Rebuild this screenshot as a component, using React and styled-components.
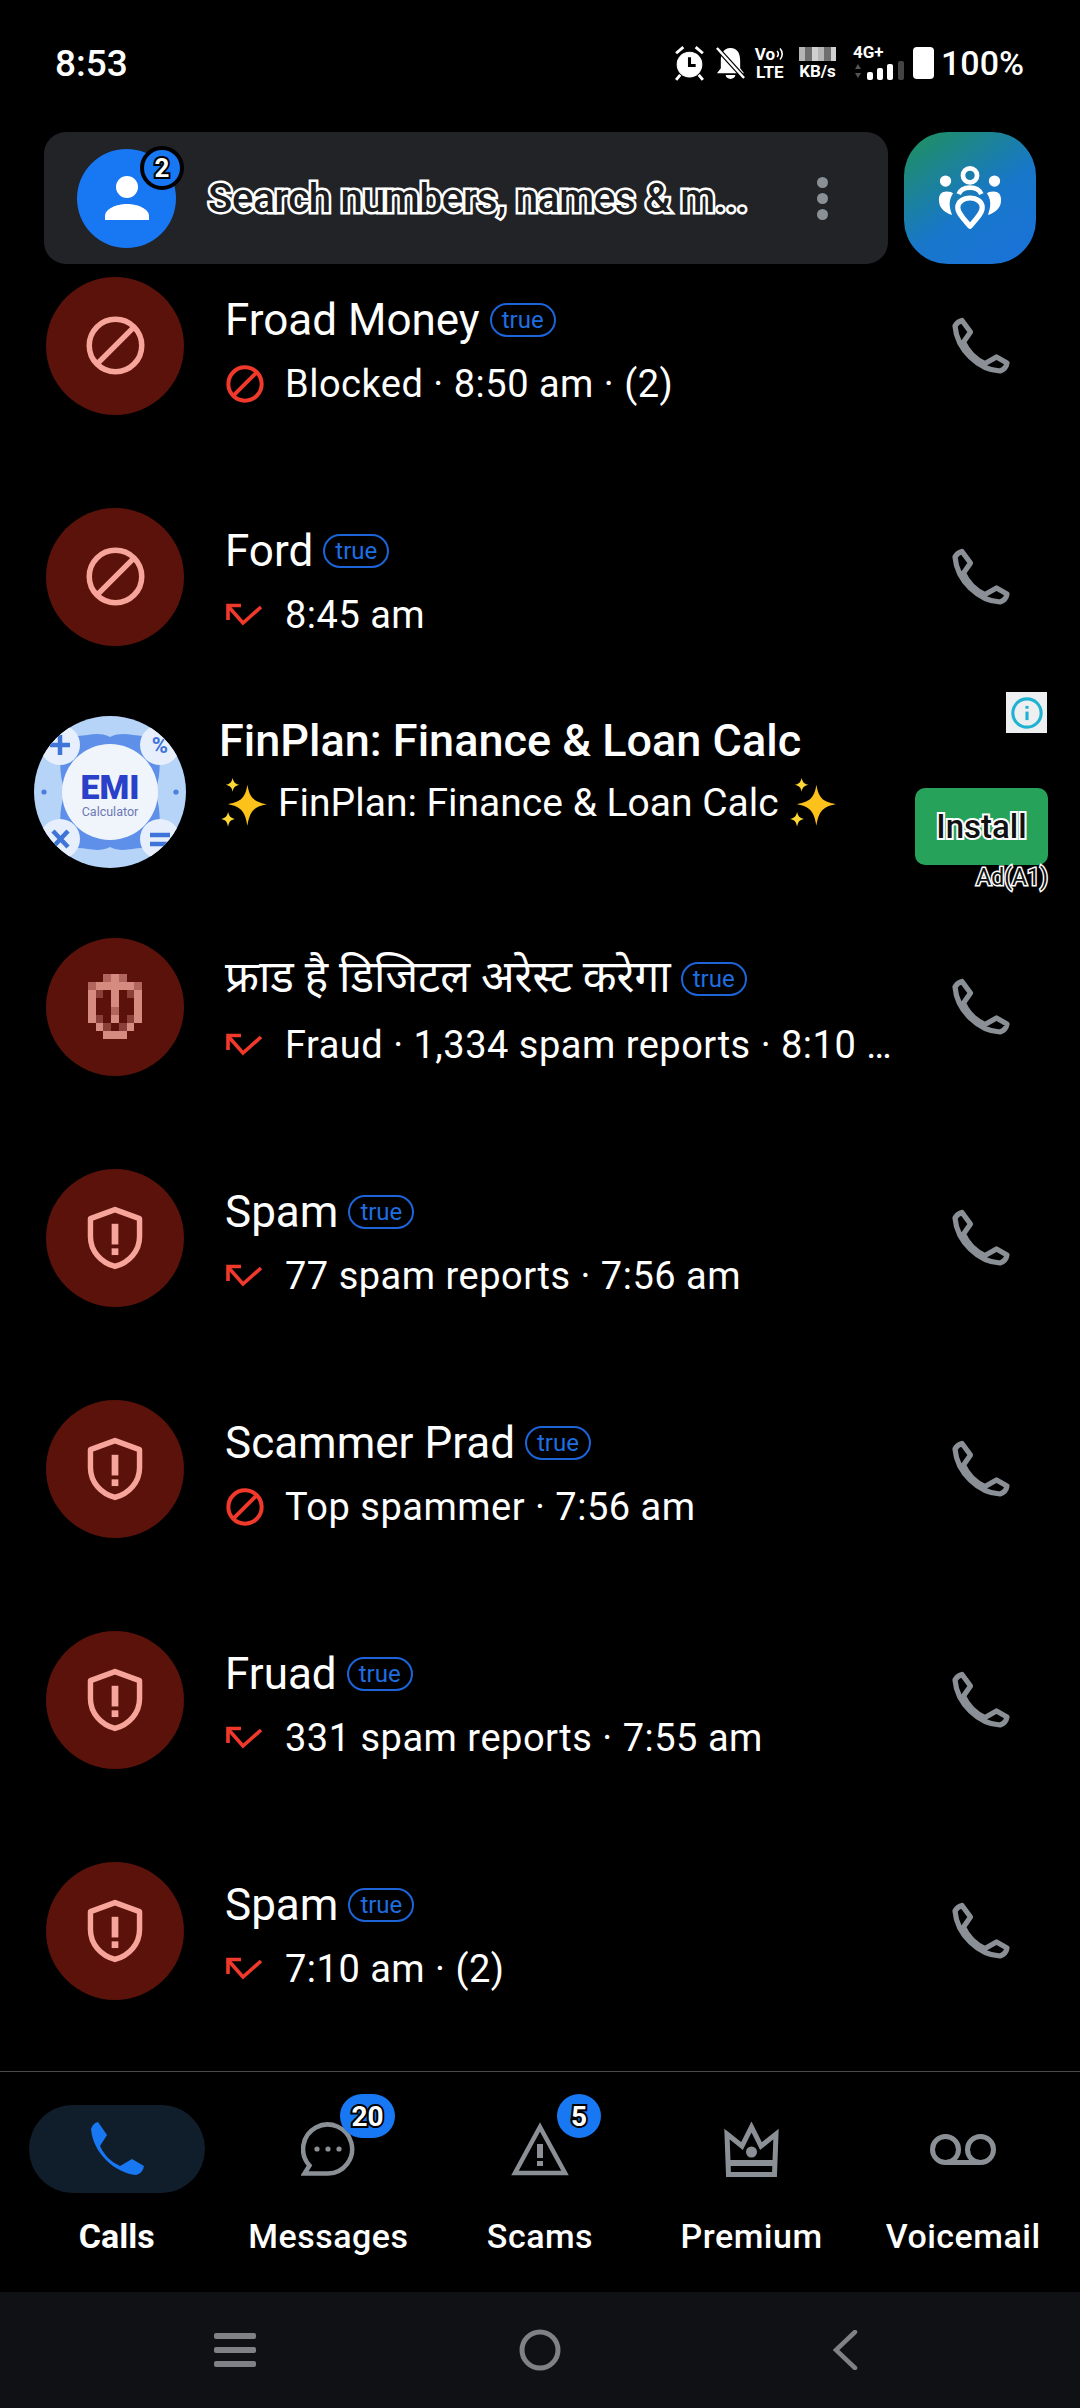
import React from 'react';
import styled, { createGlobalStyle } from 'styled-components';

const GlobalStyle = createGlobalStyle`
  html, body {
    margin: 0;
    padding: 0;
    background: #000;
  }
  * {
    box-sizing: border-box;
  }
`;

const Screen = styled.div`
  width: 1080px;
  height: 2408px;
  display: flex;
  flex-direction: column;
  overflow: hidden;
  background: #000;
  color: #fff;
  font-family: Roboto, "Noto Sans", sans-serif;
`;

const StatusBar = styled.div`
  height: 132px;
  flex: none;
  padding: 0 56px 6px 55px;
  display: flex;
  align-items: center;
  justify-content: space-between;
`;

const Clock = styled.span`
  font-size: 37px;
  font-weight: 500;
`;

const StatusIcons = styled.div`
  display: flex;
  align-items: center;
  gap: 10px;
`;

const StackedLabel = styled.div`
  display: flex;
  flex-direction: column;
  align-items: ${(p) => p.$align || 'center'};
  gap: ${(p) => p.$gap || 3}px;
  margin-left: ${(p) => p.$offset || 0}px;
  font-size: 17px;
  font-weight: 700;
  line-height: 15px;
`;

const VoLine = styled.span`
  display: flex;
  align-items: center;
  gap: 1px;
`;

const BlurBlock = styled.div`
  width: 37px;
  height: 14px;
  background: repeating-linear-gradient(90deg, #b5b5b5 0 6px, #6f6f6f 6px 13px, #d0d0d0 13px 19px);
`;

const Battery = styled.div`
  width: 21px;
  height: 32px;
  margin-left: -2px;
  border-radius: 4px;
  background: #fff;
`;

const BatteryText = styled.span`
  font-size: 34px;
  font-weight: 500;
  margin-left: -3px;
`;

const SearchRow = styled.div`
  height: 132px;
  flex: none;
  padding: 0 44px;
  display: flex;
  gap: 16px;
`;

const SearchBar = styled.div`
  flex: 1;
  display: flex;
  align-items: center;
  padding: 0 33px;
  background: #212327;
  border-radius: 22px;
`;

const ProfileAvatar = styled.div`
  width: 99px;
  height: 99px;
  flex: none;
  position: relative;
  display: flex;
  align-items: center;
  justify-content: center;
  border-radius: 50%;
  background: #1877f2;
`;

const ProfileBadge = styled.div`
  position: absolute;
  top: -3px;
  right: -8px;
  width: 44px;
  height: 44px;
  display: flex;
  align-items: center;
  justify-content: center;
  border-radius: 50%;
  border: 4px solid #000;
  background: #1877f2;
  font-size: 26px;
  font-weight: 700;
  -webkit-text-stroke: 4px #000;
  paint-order: stroke fill;
`;

const SearchText = styled.span`
  flex: 1;
  margin-left: 32px;
  font-size: 40px;
  font-weight: 500;
  letter-spacing: -0.2px;
  white-space: nowrap;
  color: #1c1d20;
  -webkit-text-stroke: 5px #fff;
  paint-order: stroke fill;
`;

const MenuDots = styled.div`
  display: flex;
  flex-direction: column;
  gap: 5px;
  margin-right: 27px;

  span {
    width: 11px;
    height: 11px;
    border-radius: 50%;
    background: #8b9096;
  }
`;

const FamilyButton = styled.div`
  width: 132px;
  flex: none;
  display: flex;
  align-items: center;
  justify-content: center;
  border-radius: 44px;
  background: linear-gradient(145deg, #1f8f63 5%, #1877c9 55%, #1a72dc 100%);
`;

const ListViewport = styled.div`
  flex: 1;
  overflow: hidden;
`;

const List = styled.div`
  margin-top: -34px;
`;

const Row = styled.div`
  height: 231px;
  display: flex;
  align-items: center;
  padding: 0 46px;
`;

const Avatar = styled.div`
  width: 138px;
  height: 138px;
  flex: none;
  display: flex;
  align-items: center;
  justify-content: center;
  border-radius: 50%;
  background: #5a120b;
`;

const RowBody = styled.div`
  flex: 1;
  min-width: 0;
  margin: 10px 0 0 41px;
`;

const TitleLine = styled.div`
  display: flex;
  align-items: center;
  gap: 10px;
  height: 56px;
`;

const Title = styled.span`
  font-size: 44px;
  white-space: nowrap;
  padding-bottom: ${(p) => (p.$lifted ? 12 : 0)}px;
`;

const Tag = styled.span`
  width: 66px;
  height: 34px;
  display: flex;
  align-items: center;
  justify-content: center;
  margin-bottom: ${(p) => (p.$lifted ? 4 : 0)}px;
  border: 2px solid #1c64d8;
  border-radius: 17px;
  color: #1f6ee0;
  font-size: 24px;
`;

const SubLine = styled.div`
  display: flex;
  align-items: center;
  height: 52px;
  margin-top: 10px;
  font-size: 38px;
  letter-spacing: 0.5px;
  white-space: nowrap;
`;

const SubIcon = styled.span`
  width: 60px;
  flex: none;
  display: flex;
  align-items: center;
`;

const CallButton = styled.div`
  width: 120px;
  flex: none;
  display: flex;
  justify-content: flex-end;
  padding-right: 23px;
`;

const AdRow = styled.div`
  height: 199px;
  position: relative;
  display: flex;
  align-items: center;
  padding: 0 33px;
`;

const AdBody = styled.div`
  margin: -40px 0 0 32px;
`;

const AdTitle = styled.div`
  font-size: 45px;
  font-weight: 500;
  line-height: 56px;
`;

const AdSubtitle = styled.div`
  display: flex;
  align-items: center;
  gap: 9px;
  margin-top: 6px;
  font-size: 39px;
  line-height: 54px;
`;

const AdInfo = styled.div`
  position: absolute;
  top: 0;
  right: 33px;
  width: 41px;
  height: 41px;
  display: flex;
  align-items: center;
  justify-content: center;
  background: #eeeff1;
`;

const InstallColumn = styled.div`
  position: absolute;
  top: 96px;
  right: 32px;
  display: flex;
  flex-direction: column;
  align-items: flex-end;
`;

const InstallButton = styled.div`
  width: 133px;
  height: 77px;
  display: flex;
  align-items: center;
  justify-content: center;
  border-radius: 10px;
  background: #27a25a;
  color: #111;
  font-size: 33px;
  font-weight: 500;
  -webkit-text-stroke: 4px #fff;
  paint-order: stroke fill;
`;

const AdLabel = styled.div`
  font-size: 23px;
  line-height: 26px;
  color: #111;
  -webkit-text-stroke: 3px #fff;
  paint-order: stroke fill;
`;

const BottomNav = styled.div`
  height: 221px;
  flex: none;
  display: flex;
  padding: 0 11px;
  border-top: 1px solid #4a4a4a;
`;

const Tab = styled.div`
  flex: 1;
  display: flex;
  flex-direction: column;
  align-items: center;
  padding-top: 33px;
`;

const TabIcon = styled.div`
  width: 176px;
  height: 88px;
  position: relative;
  display: flex;
  align-items: center;
  justify-content: center;
  border-radius: 44px;
  background: ${(p) => (p.$active ? '#101e2c' : 'transparent')};
`;

const TabBadge = styled.span`
  position: absolute;
  top: -11px;
  left: ${(p) => p.$left}px;
  min-width: 44px;
  height: 44px;
  padding: 0 11px;
  display: flex;
  align-items: center;
  justify-content: center;
  border-radius: 22px;
  background: #1877f2;
  font-size: 28px;
  font-weight: 700;
  -webkit-text-stroke: 4px #000;
  paint-order: stroke fill;
`;

const TabLabel = styled.span`
  margin-top: 23px;
  font-size: 34px;
  font-weight: ${(p) => (p.$active ? 700 : 500)};
  letter-spacing: ${(p) => (p.$active ? 0 : 0.5)}px;
`;

const SystemNav = styled.div`
  height: 116px;
  flex: none;
  display: flex;
  align-items: center;
  justify-content: center;
  gap: 235px;
  background: #0f1115;
`;

const SystemButton = styled.div`
  width: 70px;
  display: flex;
  justify-content: center;
`;

const PHONE_PATH = 'M4 10 Q6 6 11 4.5 L19.5 16 L12.5 26 C17 36 24 43 34 47.5 L45.5 41 L56 47 Q55 53 49 55 C28 54 6 34 4 10 Z';
const PHONE_SOLID = 'M4 10 Q6 4 11 3 L20 16 L13 27 C17 36 24 43 33 47 L45 40 L57 47 Q56 54 49 56 C28 54 6 34 4 10 Z';

const BlockIcon = ({ size = 63, color = '#f7a49b', stroke = 2.1 }) => (
  <svg width={size} height={size} viewBox="0 0 24 24" fill="none" stroke={color} strokeWidth={stroke}>
    <circle cx="12" cy="12" r="10" />
    <line x1="5" y1="19" x2="19" y2="5" />
  </svg>
);

const ShieldIcon = () => (
  <svg width="62" height="68" viewBox="0 0 24 26" fill="none">
    <path d="M12 2 L21.5 5.5 V12.5 C21.5 18 17.5 22.5 12 24 C6.5 22.5 2.5 18 2.5 12.5 V5.5 Z" stroke="#f7a49b" strokeWidth="2.1" strokeLinejoin="round" />
    <rect x="10.7" y="7.5" width="2.6" height="8" fill="#f7a49b" />
    <rect x="10.7" y="17" width="2.6" height="2.6" fill="#f7a49b" />
  </svg>
);

// the first fraud row has its icon pixelated in the screenshot
const PIXEL_ROWS = [
  '..232..',
  '2333332',
  '31.3.13',
  '3..3..3',
  '3..2..3',
  '31.3.13',
  '.31.13.',
  '..333..',
];
const PIXEL_SHADES = { 1: '#8a3f37', 2: '#b2655c', 3: '#d68b81' };

const PixelShield = () => (
  <svg width="54" height="65" viewBox="0 0 7 8" preserveAspectRatio="none" shapeRendering="crispEdges">
    {PIXEL_ROWS.map((line, y) =>
      line.split('').map((c, x) =>
        c === '.' ? null : <rect key={`${x}-${y}`} x={x} y={y} width="1" height="1" fill={PIXEL_SHADES[c]} />
      )
    )}
  </svg>
);

const MissedIcon = () => (
  <svg width="38" height="24" viewBox="0 0 38 24" fill="none" stroke="#f0392b" strokeWidth="3.6">
    <path d="M16 2.5 H3 V17" />
    <path d="M3 3 L18 20 L36 4" />
  </svg>
);

const PhoneIcon = () => (
  <svg width="60" height="60" viewBox="0 0 60 60">
    <path d={PHONE_PATH} fill="none" stroke="#8b9096" strokeWidth="5.2" strokeLinejoin="round" />
  </svg>
);

const Sparkle = () => (
  <svg width="50" height="56" viewBox="0 0 44 48">
    <path d="M25 8 C27 20 31 23 42 25 C31 27 27 31 25 44 C23 31 19 27 8 25 C19 23 23 20 25 8 Z" fill="#fcc21b" />
    <path d="M12 2 C13 6 14 7 18 8 C14 9 13 10 12 14 C11 10 10 9 6 8 C10 7 11 6 12 2 Z" fill="#fdd835" />
    <path d="M8 32 C9 36 10 37 14 38 C10 39 9 40 8 45 C7 40 6 39 2 38 C6 37 7 36 8 32 Z" fill="#fdd835" />
  </svg>
);

const EmiLogo = () => (
  <svg width="154" height="154" viewBox="0 0 154 154">
    <defs>
      <clipPath id="emiClip">
        <circle cx="77" cy="77" r="76" />
      </clipPath>
    </defs>
    <g clipPath="url(#emiClip)">
      <circle cx="77" cy="77" r="77" fill="#b6d3f8" />
      <path d="M30 18 C50 26 60 14 77 22 C94 14 106 26 124 18 C128 44 128 60 122 77 C128 94 128 110 124 136 C104 128 94 140 77 132 C60 140 50 128 30 136 C26 110 26 94 32 77 C26 60 26 44 30 18 Z" fill="#5e90ea" />
      <circle cx="77" cy="77" r="48" fill="#f0f4fb" />
      <circle cx="27" cy="30" r="20" fill="#e6effb" />
      <circle cx="127" cy="30" r="20" fill="#e6effb" />
      <circle cx="27" cy="124" r="20" fill="#e6effb" />
      <circle cx="127" cy="124" r="20" fill="#e6effb" />
      <path d="M27 20 V40 M17 30 H37" stroke="#3f74d8" strokeWidth="4.5" />
      <path d="M20 116 L35 132 M35 116 L20 132" stroke="#3f74d8" strokeWidth="4.5" />
      <path d="M117 120 H137 M117 129 H137" stroke="#3f74d8" strokeWidth="4.5" />
      <text x="127" y="38" textAnchor="middle" fontFamily="Roboto, sans-serif" fontSize="22" fontWeight="700" fill="#3f74d8">%</text>
      <circle cx="11" cy="77" r="2.6" fill="#4b7fde" />
      <circle cx="143" cy="77" r="2.6" fill="#4b7fde" />
      <text x="77" y="84" textAnchor="middle" fontFamily="Roboto, sans-serif" fontSize="34" fontWeight="900" fill="#2a40c8">EMI</text>
      <text x="77" y="101" textAnchor="middle" fontFamily="Roboto, sans-serif" fontSize="12.5" fill="#6b78b5">Calculator</text>
    </g>
  </svg>
);

const FamilyIcon = () => (
  <svg width="66" height="64" viewBox="0 0 70 68" fill="none">
    <circle cx="35" cy="10" r="7.5" stroke="#fff" strokeWidth="5" />
    <circle cx="9" cy="16" r="6" fill="#fff" />
    <circle cx="61" cy="16" r="6" fill="#fff" />
    <path d="M23 30 C25 25 30 23 35 23 C40 23 45 25 47 30" stroke="#fff" strokeWidth="5" />
    <path d="M2 36 C2 30 5 27 10 27 C14 27 16 28 17 29 C13 35 12 42 16 52 C7 49 2 44 2 36 Z" fill="#fff" />
    <path d="M68 36 C68 30 65 27 60 27 C56 27 54 28 53 29 C57 35 58 42 54 52 C63 49 68 44 68 36 Z" fill="#fff" />
    <path d="M35 64 C28 56 22 50 22 44 C22 38 28 34 35 34 C42 34 48 38 48 44 C48 50 42 56 35 64 Z" stroke="#fff" strokeWidth="5.5" strokeLinejoin="round" />
  </svg>
);

const CALLS = [
  { name: 'Froad Money', sub: 'Blocked · 8:50 am · (2)', avatar: 'block', call: 'block' },
  { name: 'Ford', sub: '8:45 am', avatar: 'block', call: 'missed' },
  { ad: true },
  { name: 'फ्राड है डिजिटल अरेस्ट करेगा', lifted: true, sub: 'Fraud · 1,334 spam reports · 8:10 …', avatar: 'pixel', call: 'missed' },
  { name: 'Spam', sub: '77 spam reports · 7:56 am', avatar: 'shield', call: 'missed' },
  { name: 'Scammer Prad', sub: 'Top spammer · 7:56 am', avatar: 'shield', call: 'block' },
  { name: 'Fruad', sub: '331 spam reports · 7:55 am', avatar: 'shield', call: 'missed' },
  { name: 'Spam', sub: '7:10 am · (2)', avatar: 'shield', call: 'missed' },
];

const CallRow = ({ item }) => (
  <Row>
    <Avatar>
      {item.avatar === 'block' && <BlockIcon />}
      {item.avatar === 'shield' && <ShieldIcon />}
      {item.avatar === 'pixel' && <PixelShield />}
    </Avatar>
    <RowBody>
      <TitleLine>
        <Title $lifted={item.lifted}>{item.name}</Title>
        <Tag $lifted={item.lifted}>true</Tag>
      </TitleLine>
      <SubLine>
        <SubIcon>
          {item.call === 'block' ? <BlockIcon size={40} color="#f0392b" stroke={2.4} /> : <MissedIcon />}
        </SubIcon>
        <span>{item.sub}</span>
      </SubLine>
    </RowBody>
    <CallButton>
      <PhoneIcon />
    </CallButton>
  </Row>
);

const AdCard = () => (
  <AdRow>
    <EmiLogo />
    <AdBody>
      <AdTitle>FinPlan: Finance &amp; Loan Calc</AdTitle>
      <AdSubtitle>
        <Sparkle />
        FinPlan: Finance &amp; Loan Calc
        <Sparkle />
      </AdSubtitle>
    </AdBody>
    <AdInfo>
      <svg width="34" height="34" viewBox="0 0 24 24" fill="none" stroke="#1fb2d2" strokeWidth="2.2">
        <circle cx="12" cy="12" r="10" />
        <line x1="12" y1="11" x2="12" y2="17" />
        <line x1="12" y1="7" x2="12" y2="9" />
      </svg>
    </AdInfo>
    <InstallColumn>
      <InstallButton>Install</InstallButton>
      <AdLabel>Ad(A1)</AdLabel>
    </InstallColumn>
  </AdRow>
);

const NAV_GRAY = '#8b9096';

const TABS = [
  {
    label: 'Calls',
    active: true,
    icon: (
      <svg width="60" height="60" viewBox="0 0 60 60">
        <path d={PHONE_SOLID} fill="#1877f2" />
      </svg>
    ),
  },
  {
    label: 'Messages',
    badge: '20',
    badgeLeft: 100,
    icon: (
      <svg width="54" height="54" viewBox="0 0 54 54" fill="none">
        <path d="M3.5 51.5 L8.5 43.5 A24.5 24.5 0 1 1 27 51.5 Z" stroke={NAV_GRAY} strokeWidth="4.5" />
        <circle cx="16" cy="27" r="2.6" fill={NAV_GRAY} />
        <circle cx="27" cy="27" r="2.6" fill={NAV_GRAY} />
        <circle cx="38" cy="27" r="2.6" fill={NAV_GRAY} />
      </svg>
    ),
  },
  {
    label: 'Scams',
    badge: '5',
    badgeLeft: 105,
    icon: (
      <svg width="60" height="54" viewBox="0 0 60 54" fill="none">
        <path d="M30 5 L55 51 H5 Z" stroke={NAV_GRAY} strokeWidth="4.5" />
        <rect x="27" y="22" width="6" height="14" fill={NAV_GRAY} />
        <rect x="27" y="39" width="6" height="5" fill={NAV_GRAY} />
      </svg>
    ),
  },
  {
    label: 'Premium',
    icon: (
      <svg width="55" height="55" viewBox="0 0 55 55" fill="none">
        <path d="M3 12 L18 24 L27.5 5 L37 24 L52 12 L50.5 52.5 H4.5 Z" stroke={NAV_GRAY} strokeWidth="5" />
        <rect x="4" y="38" width="47" height="6" fill={NAV_GRAY} />
        <circle cx="27.5" cy="30" r="5.5" fill={NAV_GRAY} />
      </svg>
    ),
  },
  {
    label: 'Voicemail',
    icon: (
      <svg width="66" height="31" viewBox="0 0 66 31" fill="none" stroke={NAV_GRAY} strokeWidth="5">
        <circle cx="15.5" cy="15.5" r="13" />
        <circle cx="50.5" cy="15.5" r="13" />
        <line x1="15.5" y1="28.5" x2="50.5" y2="28.5" />
      </svg>
    ),
  },
];

const App = () => (
  <>
    <GlobalStyle />
    <Screen>
      <StatusBar>
        <Clock>8:53</Clock>
        <StatusIcons>
          <svg width="33" height="36" viewBox="3 1 30 35" fill="#fff" stroke="#fff">
            <circle cx="18" cy="20" r="12" />
            <path d="M5 9 L12 3 M31 9 L24 3 M9 30 L5 35 M27 30 L31 35" strokeWidth="2.8" />
            <path d="M18 13 V21 H24" stroke="#000" strokeWidth="3" fill="none" />
          </svg>
          <svg width="29" height="34" viewBox="2 2 30 33">
            <path d="M17 3 C25 3 27 10 27 16 V24 L31 29 H3 L7 24 V16 C7 10 9 3 17 3 Z" fill="#fff" />
            <path d="M12 31 H22 A5 4 0 0 1 12 31 Z" fill="#fff" />
            <path d="M3 3 L31 34" stroke="#000" strokeWidth="5" />
            <path d="M3 3 L31 34" stroke="#fff" strokeWidth="2.6" />
          </svg>
          <StackedLabel>
            <VoLine>
              Vo
              <svg width="9" height="14" viewBox="0 0 9 14" fill="none" stroke="#fff" strokeWidth="1.6">
                <path d="M1 4 A4 4 0 0 1 1 10" />
                <path d="M4 1.5 A8 8 0 0 1 4 12.5" />
              </svg>
            </VoLine>
            <span>LTE</span>
          </StackedLabel>
          <StackedLabel $offset={4}>
            <BlurBlock />
            <span>KB/s</span>
          </StackedLabel>
          <StackedLabel $align="flex-start" $gap={1} $offset={7}>
            <span>4G+</span>
            <svg width="52" height="20" viewBox="0 0 52 20">
              <path d="M5 3 L8 8 H2 Z M5 17 L2 12 H8 Z" fill="#555" />
              <rect x="14" y="11" width="6" height="8" rx="2" fill="#fff" />
              <rect x="24" y="7" width="6" height="12" rx="2" fill="#fff" />
              <rect x="34" y="3" width="6" height="16" rx="2" fill="#fff" />
              <rect x="45" y="0" width="6" height="19" rx="2" fill="#444" />
            </svg>
          </StackedLabel>
          <Battery />
          <BatteryText>100%</BatteryText>
        </StatusIcons>
      </StatusBar>

      <SearchRow>
        <SearchBar>
          <ProfileAvatar>
            <svg width="46" height="44" viewBox="0 0 46 44" fill="#fff">
              <circle cx="23" cy="11" r="11" />
              <path d="M1 44 V40 C1 33 12 28 23 28 C34 28 45 33 45 40 V44 Z" />
            </svg>
            <ProfileBadge>2</ProfileBadge>
          </ProfileAvatar>
          <SearchText>Search numbers, names &amp; m...</SearchText>
          <MenuDots>
            <span />
            <span />
            <span />
          </MenuDots>
        </SearchBar>
        <FamilyButton>
          <FamilyIcon />
        </FamilyButton>
      </SearchRow>

      <ListViewport>
        <List>
          {CALLS.map((item, i) =>
            item.ad ? <AdCard key={i} /> : <CallRow key={i} item={item} />
          )}
        </List>
      </ListViewport>

      <BottomNav>
        {TABS.map((tab) => (
          <Tab key={tab.label}>
            <TabIcon $active={tab.active}>
              {tab.icon}
              {tab.badge && <TabBadge $left={tab.badgeLeft}>{tab.badge}</TabBadge>}
            </TabIcon>
            <TabLabel $active={tab.active}>{tab.label}</TabLabel>
          </Tab>
        ))}
      </BottomNav>

      <SystemNav>
        <SystemButton>
          <svg width="42" height="34" viewBox="0 0 42 34" fill="#7e8186">
            <rect y="0" width="42" height="6" rx="2" />
            <rect y="14" width="42" height="6" rx="2" />
            <rect y="28" width="42" height="6" rx="2" />
          </svg>
        </SystemButton>
        <SystemButton>
          <svg width="42" height="42" viewBox="0 0 42 42" fill="none" stroke="#7e8186" strokeWidth="5">
            <circle cx="21" cy="21" r="18" />
          </svg>
        </SystemButton>
        <SystemButton>
          <svg width="26" height="40" viewBox="0 0 26 40" fill="none" stroke="#7e8186" strokeWidth="4.5" strokeLinecap="round">
            <path d="M23 2 L4 20 L23 38" />
          </svg>
        </SystemButton>
      </SystemNav>
    </Screen>
  </>
);

export default App;
